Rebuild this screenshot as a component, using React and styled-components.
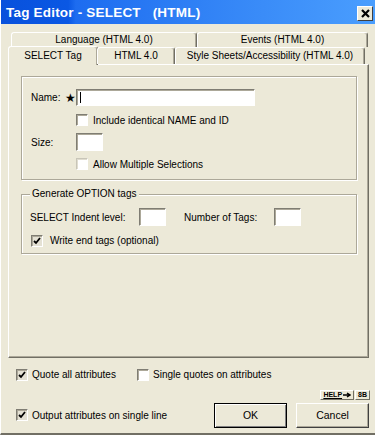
import React from 'react';
import styled, { createGlobalStyle } from 'styled-components';

const Global = createGlobalStyle`
  html, body {
    margin: 0;
    padding: 0;
    background: #ece9d8;
  }
  * {
    box-sizing: border-box;
  }
`;

const Dialog = styled.div`
  width: 375px;
  height: 435px;
  display: flex;
  flex-direction: column;
  background: #ece9d8;
  border-left: 1px solid #fff;
  border-bottom: 2px solid #716f64;
  font-family: "Liberation Sans", Arial, sans-serif;
  font-size: 10px;
  color: #000;
  overflow: hidden;
`;

const TitleBar = styled.div`
  height: 24px;
  flex: none;
  display: flex;
  align-items: center;
  justify-content: space-between;
  padding: 0 2px 0 5px;
  background: linear-gradient(to right, #0851dc 0%, #0a58e4 18%, #1d6cf0 20%, #3a8cf8 70%, #4a9efe 100%);
`;

const Title = styled.div`
  color: #fff;
  font-weight: bold;
  font-size: 13.5px;
  white-space: pre;
  letter-spacing: 0.2px;
`;

const CloseButton = styled.div`
  width: 16px;
  height: 15px;
  margin-top: 2px;
  background: #ece9d8;
  border: 1px solid;
  border-color: #fff #404040 #404040 #fff;
  display: flex;
  align-items: center;
  justify-content: center;
`;

const Body = styled.div`
  flex: 1;
  display: flex;
  flex-direction: column;
  padding: 8px 0 0 7px;
`;

const TabRow = styled.div`
  display: flex;
  height: ${(p) => p.$h}px;
  margin-left: ${(p) => p.$ml}px;
  position: relative;
  z-index: ${(p) => p.$z};
`;

const Tab = styled.div`
  width: ${(p) => p.$w}px;
  height: ${(p) => (p.$active ? p.$h + 2 : p.$h)}px;
  margin-top: ${(p) => (p.$active ? -1 : 0)}px;
  margin-left: ${(p) => (p.$active ? -1 : 0)}px;
  margin-right: ${(p) => (p.$active ? -1 : 0)}px;
  display: flex;
  align-items: center;
  justify-content: center;
  border: 1px solid;
  border-bottom: none;
  border-color: #fff #716f64 transparent #fff;
  border-radius: 3px 3px 0 0;
  background: #ece9d8;
  white-space: nowrap;
  padding-bottom: 1px;
  box-shadow: inset -1px 0 0 #aca899;
`;

const Panel = styled.div`
  width: 361px;
  height: 294px;
  flex: none;
  border: 1px solid;
  border-color: #fff #716f64 #716f64 #fff;
  box-shadow: inset -1px -1px 0 #aca899;
  padding: 11px 12px 0 12px;
  display: flex;
  flex-direction: column;
`;

const Group = styled.div`
  position: relative;
  width: 336px;
  height: ${(p) => p.$h}px;
  margin-top: ${(p) => p.$mt || 0}px;
  border: 1px solid #aca899;
  box-shadow: inset 1px 1px 0 #fff, 1px 1px 0 #fff;
  padding: ${(p) => p.$pad};
  display: flex;
  flex-direction: column;
`;

const Legend = styled.div`
  position: absolute;
  top: -7px;
  left: 8px;
  padding: 0 2px;
  background: #ece9d8;
  line-height: 12px;
`;

const Row = styled.div`
  display: flex;
  align-items: center;
  height: ${(p) => p.$h}px;
  margin-top: ${(p) => p.$mt || 0}px;
  margin-left: ${(p) => p.$ml || 0}px;
  white-space: nowrap;
`;

const Label = styled.span`
  width: ${(p) => (p.$w ? `${p.$w}px` : 'auto')};
  margin-left: ${(p) => p.$ml || 0}px;
  flex: none;
  display: flex;
  align-items: center;
`;

const Star = styled.span`
  margin-left: 5px;
  font-size: 12px;
`;

const Input = styled.div`
  width: ${(p) => p.$w}px;
  height: ${(p) => p.$h}px;
  flex: none;
  background: #fff;
  border: 1px solid;
  border-color: #7f7d73 #fff #fff #7f7d73;
  box-shadow: inset 1px 1px 0 #aca899;
  display: flex;
  align-items: center;
  padding-left: 3px;
`;

const Caret = styled.span`
  width: 1px;
  height: 11px;
  background: #000;
`;

const Box = styled.span`
  width: 12px;
  height: 12px;
  flex: none;
  background: ${(p) => (p.$grey ? '#e4e1d4' : '#fff')};
  border: 1px solid;
  border-color: ${(p) => (p.$faint ? '#c8c5b8 #fff #fff #c8c5b8' : '#7f7d73 #fff #fff #7f7d73')};
  box-shadow: inset 1px 1px 0 ${(p) => (p.$faint ? '#e0ddd0' : '#aca899')};
  display: flex;
  align-items: center;
  justify-content: center;
  margin-right: ${(p) => p.$gap || 5}px;
`;

const Check = ({ checked, faint, grey, gap, children }) => (
  <>
    <Box $faint={faint} $grey={grey} $gap={gap}>
      {checked && (
        <svg width="8" height="8" viewBox="0 0 8 8">
          <path d="M1 4 L3 6 L7 1" stroke="#000" strokeWidth="1.8" fill="none" />
        </svg>
      )}
    </Box>
    <span>{children}</span>
  </>
);

const Options = styled.div`
  display: flex;
  flex-direction: column;
  padding: 10px 0 0 8px;
`;

const OptItem = styled.div`
  display: flex;
  align-items: center;
  width: ${(p) => p.$w}px;
  flex: none;
`;

const HelpRow = styled.div`
  display: flex;
  justify-content: flex-end;
  margin-top: 9px;
  padding-right: 5px;
  height: 10px;
  gap: 1px;
`;

const HelpTag = styled.div`
  height: 10px;
  padding: 0 2px;
  border: 1px solid;
  border-color: #fff #716f64 #716f64 #fff;
  font-size: 7px;
  line-height: 8px;
  font-weight: bold;
  display: flex;
  align-items: center;
  gap: 1px;
  text-decoration: ${(p) => (p.$u ? 'underline' : 'none')};
`;

const BottomRow = styled.div`
  display: flex;
  align-items: center;
  margin-top: 2px;
  height: 26px;
`;

const Button = styled.div`
  width: 73px;
  height: 25px;
  flex: none;
  margin-left: ${(p) => p.$ml}px;
  display: flex;
  align-items: center;
  justify-content: center;
  background: #ece9d8;
  border: 1px solid;
  border-color: ${(p) => (p.$default ? '#000' : '#fff #404040 #404040 #fff')};
  box-shadow: ${(p) =>
    p.$default ? 'inset 1px 1px 0 #fff, inset -1px -1px 0 #808080' : 'inset -1px -1px 0 #aca899'};
  font-size: 10.5px;
`;

export default function App() {
  return (
    <>
      <Global />
      <Dialog>
        <TitleBar>
          <Title>Tag Editor - SELECT   (HTML)</Title>
          <CloseButton>
            <svg width="9" height="9" viewBox="0 0 9 9">
              <path d="M1 1 L8 8 M8 1 L1 8" stroke="#000" strokeWidth="2.2" />
            </svg>
          </CloseButton>
        </TitleBar>
        <Body>
          <TabRow $h={15} $ml={3} $z={1}>
            <Tab $w={186} $h={15}>Language (HTML 4.0)</Tab>
            <Tab $w={171} $h={15}>Events (HTML 4.0)</Tab>
          </TabRow>
          <TabRow $h={17} $ml={1} $z={2}>
            <Tab $w={90} $h={17} $active>SELECT Tag</Tab>
            <Tab $w={78} $h={17}>HTML 4.0</Tab>
            <Tab $w={190} $h={17}>Style Sheets/Accessibility (HTML 4.0)</Tab>
          </TabRow>
          <Panel>
            <Group $h={104} $pad="12px 0 0 9px">
              <Row $h={17}>
                <Label $w={45}>
                  Name:<Star>★</Star>
                </Label>
                <Input $w={179} $h={17}>
                  <Caret />
                </Input>
              </Row>
              <Row $h={14} $mt={7} $ml={45}>
                <Check>Include identical NAME and ID</Check>
              </Row>
              <Row $h={18} $mt={6}>
                <Label $w={45}>Size:</Label>
                <Input $w={27} $h={18} />
              </Row>
              <Row $h={14} $mt={6} $ml={45}>
                <Check faint>Allow Multiple Selections</Check>
              </Row>
            </Group>
            <Group $h={60} $mt={14} $pad="13px 0 0 8px">
              <Legend>Generate OPTION tags</Legend>
              <Row $h={18}>
                <Label $w={109}>SELECT Indent level:</Label>
                <Input $w={27} $h={18} />
                <Label $w={90} $ml={18}>
                  Number of Tags:
                </Label>
                <Input $w={27} $h={18} />
              </Row>
              <Row $h={13} $mt={8} $ml={1}>
                <Check checked grey gap={7}>
                  Write end tags (optional)
                </Check>
              </Row>
            </Group>
          </Panel>
          <Options>
            <Row $h={13}>
              <OptItem $w={121}>
                <Check checked grey gap={4}>
                  Quote all attributes
                </Check>
              </OptItem>
              <OptItem $w={200}>
                <Check gap={4}>Single quotes on attributes</Check>
              </OptItem>
            </Row>
            <HelpRow>
              <HelpTag $u>
                HELP
                <svg width="8" height="6" viewBox="0 0 8 6">
                  <path d="M0 3 H6 M4 1 L7 3 L4 5" stroke="#000" strokeWidth="1.4" fill="none" />
                </svg>
              </HelpTag>
              <HelpTag>8B</HelpTag>
            </HelpRow>
            <BottomRow>
              <OptItem $w={198}>
                <Check checked grey gap={4}>
                  Output attributes on single line
                </Check>
              </OptItem>
              <Button $ml={0} $default>
                OK
              </Button>
              <Button $ml={9}>Cancel</Button>
            </BottomRow>
          </Options>
        </Body>
      </Dialog>
    </>
  );
}
